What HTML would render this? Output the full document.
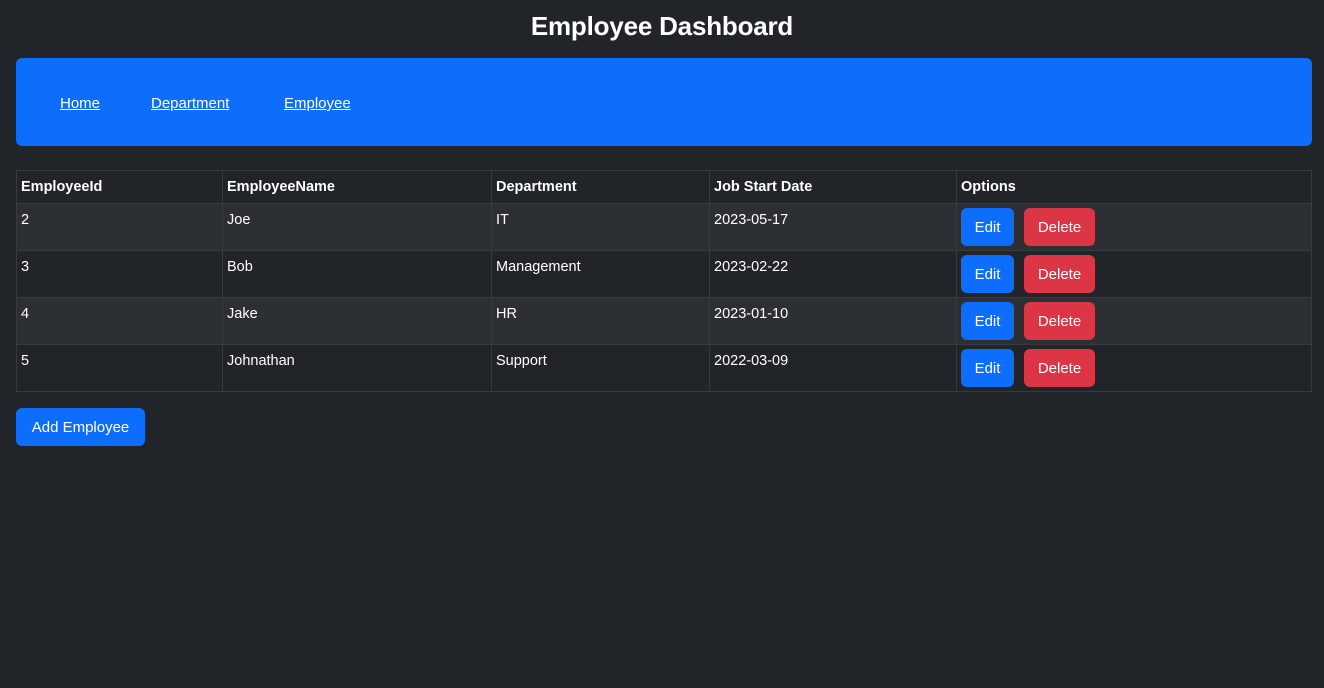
<!DOCTYPE html>
<html><head><style>
*{box-sizing:border-box;margin:0;padding:0}
body{background:#212529;color:#fff;font-family:"Liberation Sans",sans-serif;font-size:15px;width:1324px;height:688px;overflow:hidden}
h1{text-align:center;font-size:26px;font-weight:bold;line-height:52px;height:52px;letter-spacing:-0.2px}
.nav{position:absolute;left:16px;top:58px;width:1296px;height:88px;background:#0d6efd;border-radius:6px}
.nav a{position:absolute;top:37px;color:#fff;text-decoration:underline;font-size:15px}
table{position:absolute;left:16px;top:170px;width:1296px;border-collapse:collapse;font-size:14.5px}
td,th{border:1px solid #373b3e;text-align:left;vertical-align:top;padding:0 4px}
th{height:33px;vertical-align:middle;font-weight:bold}
td{height:47px;padding-top:8px}
tr.s td{background:#2c3034}
.b{display:inline-block;height:38px;line-height:40px;border-radius:6px;color:#fff;text-align:center;margin-top:-4px;font-size:15px}
.e{background:#0d6efd;width:53px}
.d{background:#dc3545;width:71px;margin-left:10px}
.add{position:absolute;left:16px;top:408px;width:129px;height:38px;line-height:40px;background:#0d6efd;border-radius:6px;text-align:center}
</style></head><body>
<h1>Employee Dashboard</h1>
<div class="nav"><a style="left:44px">Home</a><a style="left:135px">Department</a><a style="left:268px">Employee</a></div>
<table>
<tr><th style="width:206px">EmployeeId</th><th style="width:269px">EmployeeName</th><th style="width:218px">Department</th><th style="width:247px">Job Start Date</th><th>Options</th></tr>
<tr class="s"><td>2</td><td>Joe</td><td>IT</td><td>2023-05-17</td><td><span class="b e">Edit</span><span class="b d">Delete</span></td></tr>
<tr><td>3</td><td>Bob</td><td>Management</td><td>2023-02-22</td><td><span class="b e">Edit</span><span class="b d">Delete</span></td></tr>
<tr class="s"><td>4</td><td>Jake</td><td>HR</td><td>2023-01-10</td><td><span class="b e">Edit</span><span class="b d">Delete</span></td></tr>
<tr><td>5</td><td>Johnathan</td><td>Support</td><td>2022-03-09</td><td><span class="b e">Edit</span><span class="b d">Delete</span></td></tr>
</table>
<div class="add">Add Employee</div>
</body></html>
